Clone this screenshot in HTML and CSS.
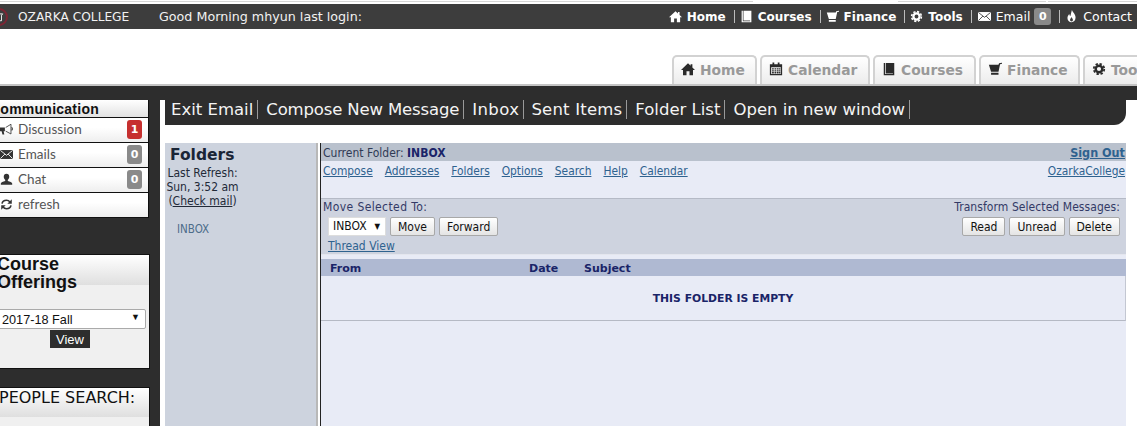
FILE: index.html
```html
<!DOCTYPE html>
<html lang="en">
<head>
<meta charset="utf-8">
<title>Ozarka College</title>
<link rel="stylesheet" href="styles.css">
</head>
<body>
<svg class="defs" width="0" height="0" aria-hidden="true">
  <symbol id="i-home" viewBox="0 0 16 16"><path d="M8 1.500 0 9h2.300v6h4v-4.500h3.400V15h4V9H16l-3-2.800V2.500h-2v1.800z"/></symbol>
  <symbol id="i-book" viewBox="0 0 16 16"><path fill-rule="evenodd" d="M2 1h12v14H2zM3.500 1v12.800h9v-.8H4.300V1z"/></symbol>
  <symbol id="i-cart" viewBox="0 0 16 16"><path d="M1 3h11l.6-1.500L16 .8V2l-2.200.6L12 11H3.500zM3.500 12.300h8.500V14.500H3.500z"/></symbol>
  <symbol id="i-gear" viewBox="0 0 16 16"><circle cx="8" cy="8" r="3.800" fill="none" stroke="currentColor" stroke-width="2.800"/><circle cx="8" cy="8" r="6" fill="none" stroke="currentColor" stroke-width="2" stroke-dasharray="2.700 2"/></symbol>
  <symbol id="i-mail" viewBox="0 0 16 16"><path d="M0 2.500h16v11H0z"/><path d="M.5 3 8 9l7.500-6M.5 13 6 7.500M15.500 13 10 7.500" fill="none" stroke="#3d3d3d" stroke-width="1.100"/></symbol>
  <symbol id="i-mail-d" viewBox="0 0 16 16"><path d="M0 2.500h16v11H0z"/><path d="M.5 3 8 9l7.500-6M.5 13 6 7.500M15.500 13 10 7.500" fill="none" stroke="#fff" stroke-width="1.100"/></symbol>
  <symbol id="i-fire" viewBox="0 0 16 16"><path d="M8.500 0c1 3 4.500 4.800 4.500 9.300C13 12.800 10.700 15 8 15s-5-2.200-5-5.200C3 7.500 4.300 6 5.300 4.800c.2 1.500.7 2.200 1.400 2.500C7 5 8 2.500 8.500 0zM8 8.500c-.5 1.500-1.800 2.200-1.800 3.800 0 1 .8 1.700 1.800 1.700s1.800-.7 1.800-1.700c0-1.600-1.300-2.300-1.800-3.800z"/></symbol>
  <symbol id="i-cal" viewBox="0 0 16 16"><path d="M4 .5h2v2h4v-2h2v2h3V15H1V2.500h3zM2.500 6v7.700h11V6z"/><path d="M3.500 7h2v1.500h-2zM6.300 7h2v1.500h-2zM9 7h2v1.500H9zM11.500 7h1.500v1.500h-1.500zM3.500 9.300h2v1.500h-2zM6.300 9.300h2v1.500h-2zM9 9.300h2v1.500H9zM11.500 9.300h1.500v1.500h-1.500zM3.500 11.500h2V13h-2zM6.300 11.500h2V13h-2zM9 11.500h2V13H9zM11.500 11.500h1.500V13h-1.500z"/></symbol>
  <symbol id="i-horn" viewBox="0 0 16 16"><path d="M0 5.500h6V10H4.500l.8 4H3L2 10H0z"/><path d="M7 5.500 13.500 1.500v12L7 10M13.500 6h2v2.500h-2" fill="none" stroke="currentColor" stroke-width="1"/></symbol>
  <symbol id="i-user" viewBox="0 0 16 16"><path d="M8 1c2.200 0 3.400 1.600 3.400 3.700 0 1.700-.8 3-1.800 3.700v1.400c2.500.7 5.400 1.700 5.400 3V14.500H1v-1.700c0-1.300 2.900-2.300 5.400-3V8.400c-1-.7-1.800-2-1.800-3.700C4.600 2.600 5.800 1 8 1z"/></symbol>
  <symbol id="i-sync" viewBox="0 0 16 16"><path d="M2.500 7C3 4.300 5.200 2.800 8 2.800c1.800 0 3.200.7 4.200 2M13.500 9C13 11.700 10.800 13.200 8 13.200c-1.800 0-3.200-.7-4.200-2" fill="none" stroke="currentColor" stroke-width="2"/><path d="M14.500 1.500V7H9zM1.500 14.500V9H7z"/></symbol>
  <symbol id="i-logo" viewBox="0 0 16 16"><path d="M1 3h13l-2 2v9H5V5z" fill="none" stroke="#fff" stroke-width="1.400"/></symbol>
</svg>

<header>
  <div class="strip">
    <span class="strip-a"></span><span class="strip-gap"></span><span class="strip-b"></span><span class="strip-c"></span>
  </div>
  <div class="topbar">
    <div class="brand">
      <span class="logo"><svg class="logo-mark"><use href="#i-logo"/></svg></span>
      <span class="college">OZARKA COLLEGE</span>
      <span class="greeting">Good Morning mhyun last login:</span>
    </div>
    <nav class="topnav">
      <a class="tn tn-home"><svg class="ic"><use href="#i-home"/></svg><b>Home</b></a>
      <a class="tn tn-courses"><svg class="ic"><use href="#i-book"/></svg><b>Courses</b></a>
      <a class="tn tn-finance"><svg class="ic"><use href="#i-cart"/></svg><b>Finance</b></a>
      <a class="tn tn-tools"><svg class="ic"><use href="#i-gear"/></svg><b>Tools</b></a>
      <a class="tn tn-email"><svg class="ic"><use href="#i-mail"/></svg>Email<span class="tn-badge">0</span></a>
      <a class="tn tn-contact"><svg class="ic"><use href="#i-fire"/></svg>Contact</a>
    </nav>
  </div>
  <div class="tabs">
    <a class="tab tab-home"><svg class="ic"><use href="#i-home"/></svg>Home</a>
    <a class="tab tab-cal"><svg class="ic"><use href="#i-cal"/></svg>Calendar</a>
    <a class="tab tab-courses"><svg class="ic"><use href="#i-book"/></svg>Courses</a>
    <a class="tab tab-fin"><svg class="ic"><use href="#i-cart"/></svg>Finance</a>
    <a class="tab tab-tools"><svg class="ic"><use href="#i-gear"/></svg>Tools</a>
  </div>
</header>

<div class="page">
  <aside class="sidebar">
    <section class="comm">
      <h2 class="comm-title">Communication</h2>
      <a class="comm-row"><svg class="ic"><use href="#i-horn"/></svg><span class="comm-label">Discussion</span><span class="badge badge-red">1</span></a>
      <a class="comm-row"><svg class="ic"><use href="#i-mail-d"/></svg><span class="comm-label">Emails</span><span class="badge">0</span></a>
      <a class="comm-row"><svg class="ic"><use href="#i-user"/></svg><span class="comm-label">Chat</span><span class="badge">0</span></a>
      <a class="comm-row"><svg class="ic"><use href="#i-sync"/></svg><span class="comm-label">refresh</span></a>
    </section>
    <section class="panel offerings">
      <h2 class="panel-title">Course<br>Offerings</h2>
      <div class="panel-body">
        <div class="term"><span>2017-18 Fall</span></div>
        <button class="view" type="button">View</button>
      </div>
    </section>
    <section class="panel people">
      <h2 class="panel-title people-title">PEOPLE SEARCH:</h2>
      <div class="panel-body"></div>
    </section>
  </aside>

  <main class="main">
    <nav class="mailbar">
      <a>Exit Email</a><a class="mb-compose">Compose New Message</a><a class="mb-inbox">Inbox</a><a class="mb-sent">Sent Items</a><a>Folder List</a><a>Open in new window</a>
    </nav>
    <div class="mail">
      <div class="folders">
        <h1>Folders</h1>
        <div class="refresh">Last Refresh:<br>Sun, 3:52 am<br>(<u>Check mail</u>)</div>
        <a class="folder-link">INBOX</a>
      </div>
      <div class="divider"></div>
      <div class="content">
        <div class="row-current">
          <span>Current Folder: <b>INBOX</b></span>
          <a class="signout">Sign Out</a>
        </div>
        <div class="row-links">
          <div class="links"><a>Compose</a><a>Addresses</a><a>Folders</a><a>Options</a><a>Search</a><a>Help</a><a>Calendar</a></div>
          <a class="org">OzarkaCollege</a>
        </div>
        <div class="row-actions">
          <div class="act-left">
            <div class="act-label">Move Selected To:</div>
            <div class="act-btns">
              <div class="mini-select">INBOX</div>
              <button class="btn" type="button">Move</button>
              <button class="btn" type="button">Forward</button>
            </div>
            <a class="thread">Thread View</a>
          </div>
          <div class="act-right">
            <div class="act-label">Transform Selected Messages:</div>
            <div class="act-btns">
              <button class="btn" type="button">Read</button>
              <button class="btn" type="button">Unread</button>
              <button class="btn" type="button">Delete</button>
            </div>
          </div>
        </div>
        <div class="list-head"><span class="h-from">From</span><span class="h-date">Date</span><span>Subject</span></div>
        <div class="empty">THIS FOLDER IS EMPTY</div>
      </div>
    </div>
  </main>
</div>
</body>
</html>
```
FILE: styles.css
```css
* { box-sizing: border-box; }
html, body { margin: 0; padding: 0; }
body {
  width: 1137px;
  height: 426px;
  overflow: hidden;
  background: #fff;
  font-family: "DejaVu Sans", sans-serif;
  font-size: 11px;
  color: #222;
}
.defs { display: block; height: 0; }
.ic { fill: currentColor; flex: none; display: block; }
a { color: inherit; }
h1, h2 { margin: 0; }

/* top strip */
.strip { height: 4px; display: flex; align-items: flex-start; padding-top: 1px; }
.strip span { height: 1px; display: block; background: #d6d6d6; }
.strip-a { width: 754px; }
.strip-gap { width: 146px; background: #fff !important; }
.strip-b { width: 148px; }
.strip-c { width: 89px; margin-left: 2px; }

/* top bar */
.topbar {
  height: 25px;
  background: #3d3d3d;
  color: #f2f2f2;
  display: flex;
  justify-content: space-between;
  align-items: center;
  overflow: hidden;
}
.brand { display: flex; align-items: center; height: 100%; }
.logo {
  width: 18px;
  height: 18px;
  margin-left: -10px;
  border: 2px solid #7d2534;
  border-radius: 50%;
  display: flex;
  align-items: center;
  justify-content: center;
  flex: none;
}
.logo-mark { width: 10px; height: 10px; }
.college { margin-left: 10px; font-size: 12.2px; width: 141px; white-space: nowrap; }
.greeting { font-size: 12.7px; white-space: nowrap; }
.topnav { display: flex; align-items: center; margin-right: -10px; height: 100%; font-size: 12.5px; white-space: nowrap; }
.tn { display: flex; align-items: center; position: relative; color: #fff; }
.tn .ic { width: 13px; height: 13px; margin-right: 5px; }
.tn b { font-size: 12px; }
.tn::after { content: ""; display: block; width: 1px; height: 13px; background: #bbb; }
.tn-home::after { margin-left: 8px; margin-right: 5px; }
.tn-courses::after { margin-left: 8px; margin-right: 5px; }
.tn-finance::after { margin-left: 8px; margin-right: 5px; }
.tn-tools::after { margin-left: 8px; margin-right: 6px; }
.tn-email::after { margin-left: 8px; margin-right: 5px; }
.tn-contact::after { display: none; }
.tn-contact { padding-right: 15px; }
.tn-badge {
  margin-left: 4px;
  width: 17px;
  height: 17px;
  background: #8a8a8a;
  border-radius: 3px;
  font-weight: 700;
  font-size: 11px;
  text-align: center;
  line-height: 17px;
}

/* tabs */
.tabs {
  height: 57px;
  padding: 26px 0 0 672px;
  display: flex;
  gap: 3px;
  overflow: hidden;
  border-bottom: 2px solid #c4c4c4;
}
.tab {
  height: 29px;
  flex: none;
  display: flex;
  align-items: center;
  font-weight: 700;
  font-size: 13.8px;
  color: #999;
  background: linear-gradient(#fff, #ececec);
  border: 2px solid #d2d2d2;
  border-bottom: 0;
  border-radius: 5px 5px 0 0;
  padding: 0 0 1px 7px;
  white-space: nowrap;
}
.tab .ic { width: 14px; height: 14px; margin-right: 5px; margin-top: -3px; color: #2a2a2a; }
.tab-home { width: 85px; }
.tab-cal { width: 110px; }
.tab-courses { width: 103px; }
.tab-fin { width: 101px; }
.tab-tools { width: 100px; }

/* page */
.page {
  height: 340px;
  display: flex;
  background: linear-gradient(#2d2d2d 14px, #fff 14px);
  overflow: hidden;
}
.sidebar {
  width: 160px;
  flex: none;
  background: #2d2d2d;
  padding-top: 14px;
  overflow: hidden;
}

.comm { margin-left: -10px; width: 159px; background: #fff; border-right: 1px solid #111; border-bottom: 1px solid #111; }
.comm-title {
  height: 18px;
  font: 700 14px/18px "Liberation Sans", sans-serif;
  letter-spacing: .25px;
  color: #111;
  background: linear-gradient(#fff, #e2e2e2);
  border-bottom: 1px solid #111;
}
.comm-row {
  height: 25px;
  display: flex;
  align-items: center;
  padding: 0 0 2px 10px;
  position: relative;
  background: linear-gradient(#fff 40%, #eee);
  color: #222;
  border-bottom: 1px solid #111;
}
.comm-row:last-child { border-bottom: 0; height: 24px; }
.comm-row .ic { width: 13px; height: 13px; margin-right: 5px; color: #333; }
.comm-label {
  font: 13.5px "Lato", sans-serif;
  letter-spacing: .05px;
  color: #555;
}
.badge {
  position: absolute;
  right: 6px;
  top: 2px;
  width: 15px;
  height: 19px;
  border-radius: 3px;
  background: #8a8a8a;
  color: #fff;
  font-weight: 700;
  font-size: 11px;
  line-height: 19px;
  text-align: center;
}
.badge-red { background: #c6302f; }

.panel { margin-left: -10px; width: 160px; border: 1px solid #111; background: #f0f0f0; }
.offerings { margin-top: 36px; height: 115px; }
.people { margin-top: 18px; height: 60px; }
.panel-title {
  height: 30px;
  padding-left: 6px;
  font: 700 18px/18px "Liberation Sans", sans-serif;
  color: #111;
  background: linear-gradient(#fff, #dfdfdf);
}
.people-title {
  font: 400 16px/20px "DejaVu Sans", sans-serif;
  height: 29px;
  padding-left: 8px;
}
.panel-body { padding: 24px 3px 0 0; text-align: center; }
.term {
  height: 20px;
  background: #fff;
  border: 1px solid #aaa;
  border-radius: 2px;
  display: flex;
  align-items: center;
  padding: 1px 0 0 9px;
  font: 12.7px "Liberation Sans", sans-serif;
  color: #111;
  position: relative;
  margin-left: 1px;
}
.term::after { content: "▼"; position: absolute; right: 5px; top: 2px; font-size: 9px; color: #111; }
.view {
  display: block;
  margin: 1px 0 0 59px;
  width: 40px;
  height: 18px;
  padding: 0;
  border: 0;
  background: #2d2d2d;
  color: #fff;
  font: 13px "Liberation Sans", sans-serif;
}

/* main */
.main { flex: 1; min-width: 0; padding: 14px 11px 0 5px; }
.mailbar {
  height: 25px;
  background: #2d2d2d;
  border-radius: 0 0 12px 0;
  color: #f4f4f4;
  display: flex;
  align-items: flex-start;
  padding-left: 6px;
  font-size: 16.5px;
  line-height: 19px;
  white-space: nowrap;
}
.mailbar a { padding-right: 4px; margin-right: 8px; border-right: 1px solid #999; height: 19px; }
.mailbar .mb-compose { letter-spacing: -.15px; }
.mailbar .mb-inbox { letter-spacing: .4px; margin-right: 7px; }
.mailbar .mb-sent { letter-spacing: .2px; }
.mail { margin-top: 18px; height: 283px; display: flex; }
.folders {
  width: 151px;
  flex: none;
  background: #cdd3de;
  color: #1d2a3a;
}
.folders h1 { font-size: 15.5px; line-height: 22px; margin: 1px 0 0 5px; color: #1a2536; }
.refresh {
  width: 75px;
  text-align: center;
  line-height: 14px;
  color: #222a38;
  font-family: "DejaVu Sans Condensed", "DejaVu Sans", sans-serif;
  font-size: 12px;
}
.folder-link {
  display: block;
  margin: 14px 0 0 12px;
  color: #4d6d8a;
  font-family: "DejaVu Sans Condensed", "DejaVu Sans", sans-serif;
  font-size: 11.5px;
}
.divider {
  width: 5px;
  flex: none;
  background: #fff;
  border-left: 2px solid #b8b8b8;
  border-right: 1px solid #222;
}
.content {
  flex: 1;
  min-width: 0;
  background: #e8ebf6;
  color: #333a66;
  font-family: "DejaVu Sans Condensed", "DejaVu Sans", sans-serif;
  font-size: 12px;
}
.content a { color: #2f628f; text-decoration: underline; }
.row-current {
  height: 18px;
  background: #b9c1cd;
  display: flex;
  justify-content: space-between;
  align-items: center;
  padding: 1px 1px 0 2px;
  color: #2f3a55;
}
.row-current b { color: #1a2468; }
.content .signout { font-weight: 700; font-size: 12.5px; }
.row-links {
  height: 37px;
  display: flex;
  justify-content: space-between;
  padding: 3px 1px 0 2px;
  font-size: 11.85px;
}
.links { display: flex; gap: 12px; }
.row-actions {
  height: 57px;
  background: #ced3df;
  border-top: 1px solid #b5bac6;
  display: flex;
  justify-content: space-between;
  padding: 1px 6px 0 2px;
  border-bottom: 1px solid #e4e6ee;
}
.act-label { line-height: 15px; }
.act-left .act-label { letter-spacing: .4px; }
.act-right .act-label { letter-spacing: .07px; }
.act-btns { display: flex; gap: 4px; margin-top: 2px; }
.act-left .act-btns { margin-left: 5px; }
.act-right { text-align: right; }
.act-right .act-btns { justify-content: flex-end; }
.btn {
  height: 19px;
  padding: 0 7px;
  font: 12px "DejaVu Sans Condensed", "DejaVu Sans", sans-serif;
  color: #111;
  background: linear-gradient(#fff, #e4e4e4);
  border: 1px solid #a8a8a8;
  border-radius: 2px;
}
.mini-select {
  width: 58px;
  height: 19px;
  background: #fff;
  border: 1px solid #ddd;
  padding-left: 4px;
  color: #111;
  line-height: 17px;
  position: relative;
}
.mini-select::after { content: "▼"; position: absolute; right: 5px; top: 0; font-size: 8px; }
.content .thread { display: block; margin: 3px 0 0 5px; line-height: 15px; }
.list-head {
  margin-top: 4px;
  height: 17px;
  background: #afb9d2;
  display: flex;
  align-items: center;
  padding: 1px 0 0 9px;
  font-family: "DejaVu Sans", sans-serif;
  font-size: 11px;
  font-weight: 700;
  color: #1a2468;
}
.h-from { width: 199px; }
.h-date { width: 55px; }
.empty {
  height: 45px;
  border-bottom: 1px solid #b5b9c4;
  border-right: 1px solid #c3c7d2;
  display: flex;
  align-items: center;
  justify-content: center;
  font-family: "DejaVu Sans", sans-serif;
  font-weight: 700;
  font-size: 10.8px;
  color: #1a2468;
}
```
